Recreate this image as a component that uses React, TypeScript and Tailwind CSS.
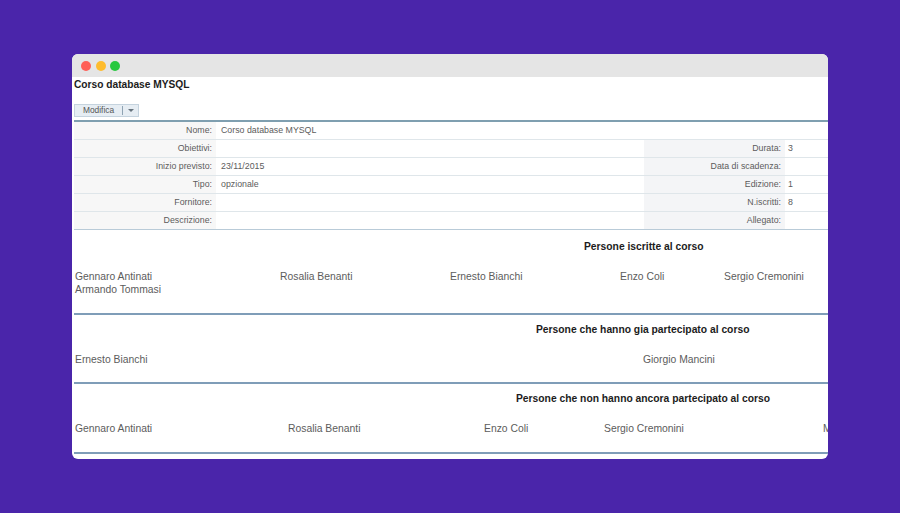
const F = "font-['Liberation_Sans',Arial,sans-serif]";

function Row({ l, v, rl, rv }: { l: string; v?: string; rl?: string; rv?: string }) {
  return (
    <div className="flex h-[18px] border-b border-[#dfe6ea] text-[8.8px] leading-[17px] text-[#5c5c5c] last:border-b-[#b9cbd8]">
      <div className="w-[142px] shrink-0 bg-[#f7f7f7] pr-[4px] text-right">{l}</div>
      <div className="flex-1 pl-[5px]">{v}</div>
      {rl !== undefined && (
        <>
          <div className="w-[141px] shrink-0 bg-[#f4f5f7] pr-[4px] text-right">{rl}</div>
          <div className="w-[43px] shrink-0 pl-[3px]">{rv}</div>
        </>
      )}
    </div>
  );
}

function Heading({ children, cls }: { children: string; cls: string }) {
  return <div className={`text-[10.3px] leading-[12px] font-bold text-[#1c1c1c] whitespace-nowrap ${cls}`}>{children}</div>;
}

export default function App() {
  return (
    <div className={`${F} flex h-[513px] w-[900px] items-start bg-[#4a25aa] pt-[54px] pl-[72px]`}>
      <div className="h-[405px] w-[756px] overflow-hidden rounded-[6px] bg-white">
        <div className="flex h-[23px] items-center gap-[4.5px] bg-[#e5e5e5] pl-[9px]">
          <span className="h-[10px] w-[10px] rounded-full bg-[#ff5f57]" />
          <span className="h-[10px] w-[10px] rounded-full bg-[#febc2e]" />
          <span className="h-[10px] w-[10px] rounded-full bg-[#28c840]" />
        </div>
        <div className="pl-[2px]">
          <div className="pt-[2px] text-[10.2px] leading-[12px] font-bold text-[#1c1c1c]">Corso database MYSQL</div>
          <div className="mt-[13px] flex h-[13px] w-[65px] items-center border border-[#c5d3de] bg-[#e6edf3] text-[8.4px] text-[#555]">
            <span className="w-[47px] text-center leading-[11px]">Modifica</span>
            <span className="h-[9px] w-px bg-[#8fa3b3]" />
            <svg className="ml-[5px]" width="6" height="3" viewBox="0 0 6 3"><path d="M0 0h6L3 3z" fill="#66737d" /></svg>
          </div>
          <div className="mt-[3px] h-[2px] bg-[#7f9fb0]" />
          <div>
            <Row l="Nome:" v="Corso database MYSQL" />
            <Row l="Obiettivi:" rl="Durata:" rv="3" />
            <Row l="Inizio previsto:" v="23/11/2015" rl="Data di scadenza:" />
            <Row l="Tipo:" v="opzionale" rl="Edizione:" rv="1" />
            <Row l="Fornitore:" rl="N.iscritti:" rv="8" />
            <Row l="Descrizione:" rl="Allegato:" />
          </div>

          <Heading cls="pt-[11px] pl-[510px]">Persone iscritte al corso</Heading>
          <div className="mt-[17px] h-[38px] pl-[1px] text-[10.35px] leading-[13px] text-[#5c5c5c]">
            <div className="flex">
              <span className="w-[205px] shrink-0">Gennaro Antinati</span>
              <span className="w-[170px] shrink-0">Rosalia Benanti</span>
              <span className="w-[170px] shrink-0">Ernesto Bianchi</span>
              <span className="w-[104px] shrink-0">Enzo Coli</span>
              <span>Sergio Cremonini</span>
            </div>
            <div>Armando Tommasi</div>
          </div>
          <div className="mt-[5px] h-[2px] bg-[#7f9db8]" />

          <Heading cls="pt-[9px] pl-[462px]">Persone che hanno gia partecipato al corso</Heading>
          <div className="mt-[17px] flex pl-[1px] text-[10.35px] leading-[13px] text-[#5c5c5c]">
            <span className="w-[568px] shrink-0">Ernesto Bianchi</span>
            <span>Giorgio Mancini</span>
          </div>
          <div className="mt-[16px] h-[2px] bg-[#7f9db8]" />

          <Heading cls="pt-[9px] pl-[442px]">Persone che non hanno ancora partecipato al corso</Heading>
          <div className="mt-[17px] flex whitespace-nowrap pl-[1px] text-[10.35px] leading-[13px] text-[#5c5c5c]">
            <span className="w-[213px] shrink-0">Gennaro Antinati</span>
            <span className="w-[196px] shrink-0">Rosalia Benanti</span>
            <span className="w-[120px] shrink-0">Enzo Coli</span>
            <span className="w-[219px] shrink-0">Sergio Cremonini</span>
            <span>Mario</span>
          </div>
          <div className="mt-[17px] h-[2px] bg-[#7f9db8]" />
        </div>
      </div>
    </div>
  );
}
